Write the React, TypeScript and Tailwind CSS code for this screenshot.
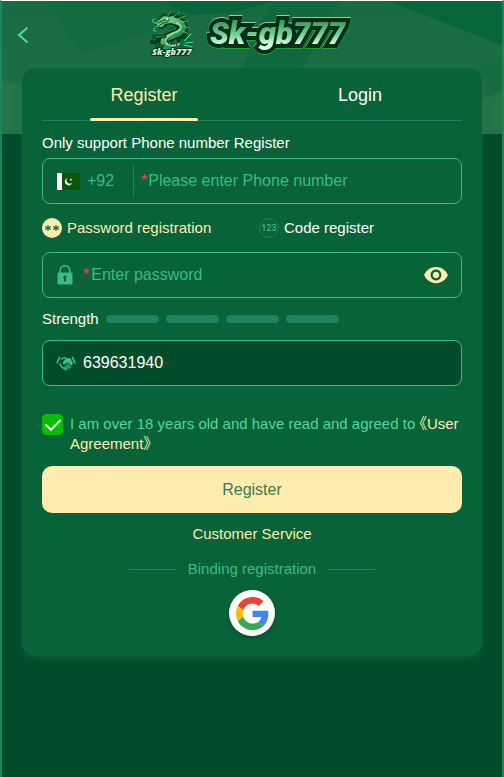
import { useState } from "react";
import type { ReactNode } from "react";
import { MdVisibility } from "react-icons/md";

const STRENGTH_LEVELS = [1, 2, 3, 4];

function Backdrop() {
  return (
    <svg
      className="absolute inset-x-0 top-0 h-[133px] w-full"
      viewBox="0 0 500 133"
      preserveAspectRatio="none"
      aria-hidden="true"
    >
      <defs>
        <linearGradient id="shade" x1="0" y1="0" x2="0" y2="1">
          <stop offset="0" stopColor="#196b42" />
          <stop offset="1" stopColor="#1d7145" />
        </linearGradient>
      </defs>
      <rect width="500" height="133" fill="url(#shade)" />
      <path d="M46 0H160L188 14 178 20 78 52Z" fill="#136a3f" />
      <path d="M160 0H272L230 12 188 14Z" fill="#07653a" />
      <path d="M272 0H338L300 67H240L260 20Z" fill="#0f683e" />
      <path d="M386 0H500V44Z" fill="#07653a" />
      <path d="M0 80 60 95V133H0Z" fill="#237449" />
      <path d="M476 70 500 56V104Z" fill="#166d42" />
      <path d="M478 100 500 90V133H478Z" fill="#237449" />
    </svg>
  );
}

function Logo() {
  return (
    <svg width="204" height="52" viewBox="0 0 204 52" role="img" aria-label="Sk-gb777">
      <defs>
        <linearGradient id="word" gradientUnits="userSpaceOnUse" x1="0" y1="13" x2="0" y2="42">
          <stop offset="0" stopColor="#3f9a5e" />
          <stop offset="0.45" stopColor="#79d394" />
          <stop offset="0.8" stopColor="#e2ffe8" />
        </linearGradient>
        <linearGradient id="scale" x1="0" y1="0" x2="1" y2="1">
          <stop offset="0" stopColor="#a5e8b0" />
          <stop offset="0.5" stopColor="#2b9d50" />
          <stop offset="1" stopColor="#0c5a2c" />
        </linearGradient>
      </defs>

      {/* dragon */}
      <g strokeLinecap="round" strokeLinejoin="round">
        <path
          d="M9 9 14 4 17 6 21 1 22 6 29 2 27 7 35 6 31 10 39 12 34 14 41 19 36 20 41 27 36 26 38 33 32 30 29 34 25 30 22 34 17 29 21 24 27 20 24 16 18 16 13 20 8 19 5 15 8 13Z"
          fill="#0a3f22"
        />
        <path d="M25 12C34 14 36 20 29 24 20 28 11 29 14 36 17 42 29 40 36 35" fill="none" stroke="#06331c" strokeWidth="9" />
        <path d="M25 12C34 14 36 20 29 24 20 28 11 29 14 36 17 42 29 40 36 35" fill="none" stroke="url(#scale)" strokeWidth="6" />
        <path d="M27 14C33 17 31 21 26 23 18 26 13 30 17 35 22 38 28 36 33 33" fill="none" stroke="#a7dfab" strokeWidth="2" strokeDasharray="1 2" />
        <path d="M6 14 10 10 14 7 18 8 23 7 27 11 22 12 26 15 20 14 15 15 12 18 8 18Z" fill="#69c77e" />
        <path d="M8 14 14 11 19 11M9 17 13 14 18 13" fill="none" stroke="#083c20" />
        <path d="M17 8 21 2M22 9 29 3M25 11 35 7M29 13 38 12M32 17 40 19M31 21 40 26" fill="none" stroke="#4dbb6a" />
        <path d="M6 14C0 14 3 9 5 10M7 17C2 20 3 23 6 22" fill="none" stroke="#73d891" />
        <circle cx="17" cy="10" r="1" fill="#e9ffed" />
        <path d="M15 28C8 25 7 30 3 31M10 28 4 27M10 29 6 34 1 33M13 37C5 37 4 42 9 40" fill="none" stroke="#063b20" strokeWidth="3" />
        <path d="M15 28C8 25 7 30 3 31M10 28 4 27M13 37C5 37 4 42 9 40" fill="none" stroke="#248f4c" />
        <path d="M32 30 37 29 41 24 41 31 45 33 39 35 44 39 36 39 33 41 27 41Z" fill="#0b6b3f" />
        <path d="M34 32 41 25M36 34 43 33M34 36 42 38" fill="none" stroke="#3cf09c" />
        <path d="M19 20 24 18M16 32 20 29M20 36 23 33M26 38 27 34" fill="none" stroke="#07502a" />
      </g>
      <text
        x="2"
        y="46"
        fontSize="9"
        stroke="#06361d"
        strokeWidth="2"
        paintOrder="stroke"
        fill="#d5eed7"
        className="font-['Open_Sans',sans-serif] font-extrabold italic"
      >
        Sk-gb777
      </text>

      {/* wordmark */}
      <text
        x="60"
        y="35"
        fontSize="31"
        stroke="#06301a"
        strokeWidth="8"
        strokeLinejoin="miter"
        paintOrder="stroke"
        fill="url(#word)"
        className="font-['Roboto',sans-serif] font-black italic [filter:drop-shadow(0_-1px_0_#9bc7a2)_drop-shadow(0_1px_0_#16a92e)]"
      >
        Sk-gb777
      </text>
    </svg>
  );
}

function FlagPK() {
  return (
    <svg width="23" height="17" viewBox="0 0 23 17" className="shrink-0" aria-hidden="true">
      <rect width="23" height="17" fill="#0b560b" />
      <rect width="5" height="17" fill="#fff" />
      <path d="M10.5 5A3.8 3.8 0 1 0 15.3 9.6 3.3 3.3 0 0 1 10.5 5Z" fill="#fff" />
      <circle cx="14" cy="6.7" r="0.9" fill="#fff" />
    </svg>
  );
}

function LockIcon() {
  return (
    <svg width="16" height="20" viewBox="0 0 16 20" className="shrink-0" aria-hidden="true">
      <path d="M3.2 8V5.5a4.8 4.8 0 0 1 9.6 0V8" fill="none" stroke="#3dba85" strokeWidth="1.5" />
      <path
        fillRule="evenodd"
        fill="#3dba85"
        d="M1.5 7.5h13a1 1 0 0 1 1 1v10a1 1 0 0 1-1 1h-13a1 1 0 0 1-1-1v-10a1 1 0 0 1 1-1ZM8 10.5a1.8 1.8 0 0 0-1 3.2V16.5h2v-2.8a1.8 1.8 0 0 0-1-3.2Z"
      />
    </svg>
  );
}

function HandshakeIcon() {
  return (
    <svg width="20" height="15" viewBox="0 0 20 15" className="shrink-0" aria-hidden="true">
      <g fill="none" stroke="#3dba85" strokeLinecap="round" strokeLinejoin="round">
        <path d="M3.4 1.4 1.2 6.8M16.6 1.4 18.8 6.8" strokeWidth="1.7" />
        <path d="M5.4 3.2C7 1.7 8.4 1.4 9.6 2M3.8 8 6 11.2 10 13.8" strokeWidth="1.4" />
      </g>
      <path
        fill="#3dba85"
        d="M9.3 3c1.8-1.2 3.5-1.2 5.6-.4l2 5-1.4 2.2c-1.4-1.4-2.7-2.5-4.2-3.3L8.8 8c-1.6.7-2.8-.7-1.7-2Z"
      />
      <path d="m11.6 8.6 3.2 2.6M10.2 9.8l3 2.5M8.6 11l2.6 2" stroke="#3dba85" strokeWidth="1.2" strokeLinecap="round" />
    </svg>
  );
}

function GoogleIcon() {
  return (
    <svg width="33" height="33" viewBox="0 0 48 48" aria-hidden="true">
      <path fill="#EA4335" d="M24 9.5c3.54 0 6.71 1.22 9.21 3.6l6.85-6.85C35.9 2.38 30.47 0 24 0 14.62 0 6.51 5.38 2.56 13.22l7.98 6.19C12.43 13.72 17.74 9.5 24 9.5z" />
      <path fill="#4285F4" d="M46.98 24.55c0-1.57-.15-3.09-.38-4.55H24v9.02h12.94c-.58 2.96-2.26 5.48-4.78 7.18l7.73 6c4.51-4.18 7.09-10.36 7.09-17.65z" />
      <path fill="#FBBC05" d="M10.53 28.59c-.48-1.45-.76-2.99-.76-4.59s.27-3.14.76-4.59l-7.98-6.19C.92 16.46 0 20.12 0 24c0 3.88.92 7.54 2.56 10.78l7.97-6.19z" />
      <path fill="#34A853" d="M24 48c6.48 0 11.93-2.13 15.89-5.81l-7.73-6c-2.15 1.45-4.92 2.3-8.16 2.3-6.26 0-11.57-4.22-13.47-9.91l-7.98 6.19C6.51 42.62 14.62 48 24 48z" />
    </svg>
  );
}

function Tab({ active, onClick, children }: { active: boolean; onClick: () => void; children: ReactNode }) {
  return (
    <button
      type="button"
      onClick={onClick}
      className={
        active
          ? "relative flex-1 text-lg text-[#ffedb0] after:absolute after:bottom-0 after:left-1/4 after:h-[3px] after:w-1/2 after:rounded-full after:bg-[#ffedb0]"
          : "relative flex-1 text-lg text-white"
      }
    >
      {children}
    </button>
  );
}

export default function App() {
  const [tab, setTab] = useState("register");
  const [method, setMethod] = useState("password");
  const [showPassword, setShowPassword] = useState(false);
  const [agreed, setAgreed] = useState(true);
  const [invite, setInvite] = useState("639631940");

  return (
    <div className="relative flow-root min-h-screen border-x-2 border-t border-x-[#1c845e] border-t-white bg-[#034c2b] font-['Liberation_Sans','Noto_Sans_CJK_SC',sans-serif] text-[15px] leading-5 text-white">
      <Backdrop />

      <header className="relative grid h-[67px] grid-cols-[42px_1fr_42px] items-center">
        <button type="button" aria-label="Back" className="flex justify-center">
          <svg width="12" height="18" viewBox="0 0 12 18" fill="none" aria-hidden="true">
            <path d="M10.5 1.5 2 9l8.5 7.5" stroke="#4fd8a0" strokeWidth="2" />
          </svg>
        </button>
        <div className="flex justify-center">
          <Logo />
        </div>
      </header>

      <main className="relative mx-5 mb-10 rounded-[14px] bg-[#086338] px-5 pb-5 shadow-[0_3px_9px_rgba(28,132,94,0.3)]">
        <div className="-mx-1.5 flex h-[53px]">
          <Tab active={tab === "register"} onClick={() => setTab("register")}>Register</Tab>
          <Tab active={tab === "login"} onClick={() => setTab("login")}>Login</Tab>
        </div>
        <hr className="-mt-px border-[#1c845e]" />

        <form onSubmit={(e) => e.preventDefault()} className="flex flex-col pt-3">
          <label htmlFor="phone">Only support Phone number Register</label>
          <div className="mt-[5px] flex h-[46px] items-center rounded-lg border border-[#3dba85] px-3.5 text-base">
            <FlagPK />
            <select
              aria-label="Country code"
              className="ml-[7px] w-[46px] appearance-none bg-transparent text-[#3dba85] outline-none"
            >
              <option>+92</option>
            </select>
            <span className="h-8 w-px bg-[#1c845e]" />
            <span className="ml-[7px] text-[#e8493a]">*</span>
            <input
              id="phone"
              type="tel"
              placeholder="Please enter Phone number"
              className="ml-px min-w-0 flex-1 bg-transparent outline-none placeholder:text-[#3dba85]"
            />
          </div>

          <div className="my-3.5 grid grid-cols-2 gap-3.5">
            <label className="flex items-center gap-[5px] text-[#ffedb0]">
              <input
                type="radio"
                name="method"
                className="sr-only"
                checked={method === "password"}
                onChange={() => setMethod("password")}
              />
              <svg width="20" height="20" viewBox="0 0 20 20" aria-hidden="true">
                <circle cx="10" cy="10" r="10" fill="#ffedb0" />
                <path
                  d="M6 7v6M3.2 8.4l5.6 3.2M8.8 8.4l-5.6 3.2M14 7v6M11.2 8.4l5.6 3.2M16.8 8.4l-5.6 3.2"
                  stroke="#086338"
                  strokeWidth="1.1"
                />
              </svg>
              Password registration
            </label>
            <label className="flex items-center gap-[5px]">
              <input
                type="radio"
                name="method"
                className="sr-only"
                checked={method === "code"}
                onChange={() => setMethod("code")}
              />
              <span className="flex size-5 items-center justify-center rounded-full border border-[#1c845e] font-['Roboto',sans-serif] text-[9px] font-medium text-[#3dba85]" aria-hidden="true">
                123
              </span>
              Code register
            </label>
          </div>

          <div className="flex h-[46px] items-center rounded-lg border border-[#3dba85] px-3.5 text-base">
            <LockIcon />
            <span className="ml-2.5 text-[#e8493a]">*</span>
            <input
              type={showPassword ? "text" : "password"}
              aria-label="Password"
              placeholder="Enter password"
              className="ml-0.5 min-w-0 flex-1 bg-transparent outline-none placeholder:text-[#3dba85]"
            />
            <button
              type="button"
              aria-label="Show password"
              onClick={() => setShowPassword(!showPassword)}
              className="-mr-0.5"
            >
              <MdVisibility size={26} color="#ffedb0" />
            </button>
          </div>

          <div className="my-[11px] flex items-center gap-[7px]">
            Strength
            {STRENGTH_LEVELS.map((level) => (
              <span key={level} className="h-2 w-[53px] rounded-full bg-[#1c845e]" />
            ))}
          </div>

          <div className="flex h-[46px] items-center rounded-lg border border-[#3dba85] bg-[#034c2b] px-[13px] text-base">
            <HandshakeIcon />
            <input
              aria-label="Invitation code"
              value={invite}
              onChange={(e) => setInvite(e.target.value)}
              className="ml-[7px] min-w-0 flex-1 bg-transparent outline-none"
            />
          </div>

          <div className="mt-7 flex items-start gap-[7px]">
            <span className="relative flex size-[21px] shrink-0">
              <input
                id="agree"
                type="checkbox"
                checked={agreed}
                onChange={(e) => setAgreed(e.target.checked)}
                className="peer size-[21px] appearance-none rounded-sm border border-[#3dba85] checked:border-[#04be02] checked:bg-[#04be02]"
              />
              <svg
                className="pointer-events-none absolute inset-0 hidden peer-checked:block"
                viewBox="0 0 21 21"
                fill="none"
                aria-hidden="true"
              >
                <path d="m3.5 10.5 5.5 5.3 9.5-9.8" stroke="#fff" strokeWidth="2" />
              </svg>
            </span>
            <p className="text-[#4fd8a0]">
              <label htmlFor="agree">I am over 18 years old and have read and agreed to</label>{" "}
              <a href="#agreement" className="text-[#ffedb0] [font-feature-settings:'halt']">《User Agreement》</a>
            </p>
          </div>

          <button type="submit" className="mt-3 h-[47px] rounded-[10px] bg-[#ffedb0] text-base text-[#3a7a4d]">
            Register
          </button>
        </form>

        <div className="mt-[11px] flex flex-col items-center">
          <a href="#service" className="text-[#ffedb0]">Customer Service</a>
          <div className="mt-[15px] flex items-center gap-3 text-[#3dba85]">
            <span className="h-px w-[47px] bg-[#1c845e]" />
            Binding registration
            <span className="h-px w-[47px] bg-[#1c845e]" />
          </div>
          <button
            type="button"
            aria-label="Sign in with Google"
            className="mt-[11px] flex size-[46px] items-center justify-center rounded-full bg-white shadow-[0_2px_4px_rgba(0,0,0,0.25)]"
          >
            <GoogleIcon />
          </button>
        </div>
      </main>
    </div>
  );
}
